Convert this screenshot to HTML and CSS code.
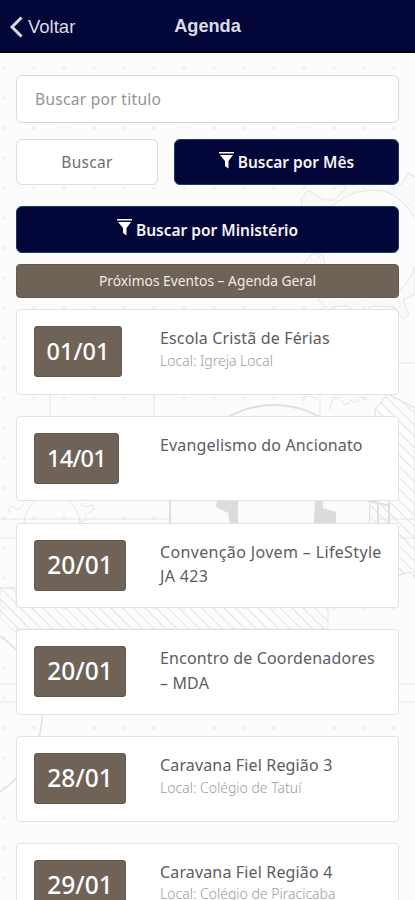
FILE: index.html
```html
<!DOCTYPE html>
<html lang="pt-BR">
<head>
    <meta charset="UTF-8">
    <meta name="viewport" content="width=device-width, initial-scale=1.0">
    <title>Agenda</title>
    <link rel="stylesheet" href="styles.css">
</head>
<body>
    <svg class="backdrop" width="415" height="900" viewBox="0 0 415 900" aria-hidden="true">
        <defs>
            <pattern id="grid" x="-11" y="53" width="30" height="30" patternUnits="userSpaceOnUse">
                <path d="M15 13v4M13 15h4" stroke="#ececee" fill="none"/>
            </pattern>
            <pattern id="hatch" width="8" height="8" patternUnits="userSpaceOnUse" patternTransform="rotate(-45)">
                <path d="M0 0v8" stroke="#e2e2e3" stroke-width="2"/>
            </pattern>
            <pattern id="fineHatch" width="3" height="3" patternUnits="userSpaceOnUse" patternTransform="rotate(-30)">
                <path d="M0 0v3" stroke="#ebebeb" stroke-width="1"/>
            </pattern>
        </defs>
        <rect y="53" width="415" height="847" fill="url(#grid)"/>
        <!-- top gear -->
        <g fill="url(#fineHatch)" stroke="#e4e4e4">
            <path d="M301 199l7-9 16 10 9 0 12-10v-8h52l3 4 8-13 9 5v44q-12-24-33-31-29-5-52 15l-30 2z"/>
            <path d="M303 264l9-10 7-1v4l3-3 3 8-2 4z"/>
            <path d="M415 266q-5 15-17 26v5h-82l9 10-8 3 6 4 11-8h14l6 7h8l10-7 22 1 9 12 6-4-6-15 12-6z"/>
        </g>
        <!-- middle parts -->
        <g fill="none" stroke="#e6e6e8">
            <path d="M50 394v22M154 394v22M320 394v22M399 363h16M0 519h415M0 538h415M0 684h415M0 702h415M0 588h16"/>
            <path d="M303 402q-2-7 7-6l8 4M330 410q0-10 6-12 6 0 7 6 5 2 8-4 4 6 10-3l8 3"/>
            <circle cx="52" cy="524" r="28"/>
            <path d="M8 514l2-8 9 4 6-8M80 503l4 4 9-2 1 4-9 7 2 4-8 2"/>
        </g>
        <circle cx="274" cy="499" r="94" fill="none" stroke="#dfdfe1" stroke-width="2"/>
        <rect x="172" y="501" width="207" height="22" fill="#fbfbfc"/>
        <path d="M170 500v23M378 502v21M389 502v21M366 500l24 6" fill="none" stroke="#dfdfe1" stroke-width="2"/>
        <path d="M217 500h21v23h-8l-2-10-12-6zM315 500h8v8l13 4v11h-22z" fill="#dcdcdf"/>
        <path d="M375 409l13-15 27 14v170l-4-6-12 3-30-50z" fill="url(#hatch)" stroke="#dcdcdd"/>
        <path d="M0 588h16v19h312v22H16v4L0 617z" fill="url(#hatch)" stroke="#e6e6e6"/>
        <circle cx="-51" cy="714" r="93" fill="none" stroke="#dfdfe1" stroke-width="1.500"/>
    </svg>

    <header class="topbar">
        <a class="back" href="#">
            <svg width="13" height="22" viewBox="0 0 13 22"><path d="M11.500 1.500L2 11l9.500 9.500" fill="none" stroke="#dcdce2" stroke-width="3"/></svg>
            Voltar
        </a>
        <h1>Agenda</h1>
    </header>

    <main class="container">
        <input type="text" class="search" placeholder="Buscar por titulo">
        <div class="actions">
            <button class="btn btn-light">Buscar</button>
            <button class="btn btn-dark">
                <svg class="filter" width="15" height="17" viewBox="0 0 15 17"><path d="M0 0h15v1.500H0zM1 3h13L9.500 9v7.500L6 14V9z" fill="#fff"/></svg>
                Buscar por Mês
            </button>
        </div>
        <button class="btn btn-dark btn-full">
            <svg class="filter" width="15" height="17" viewBox="0 0 15 17"><path d="M0 0h15v1.500H0zM1 3h13L9.500 9v7.500L6 14V9z" fill="#fff"/></svg>
            Buscar por Ministério
        </button>
        <div class="banner">Próximos Eventos – Agenda Geral</div>

        <div class="events">
            <div class="card">
                <div class="date-col"><span class="date">01/01</span></div>
                <div class="info">
                    <h2>Escola Cristã de Férias</h2>
                    <p>Local: Igreja Local</p>
                </div>
            </div>
            <div class="card">
                <div class="date-col"><span class="date narrow">14/01</span></div>
                <div class="info">
                    <h2>Evangelismo do Ancionato</h2>
                </div>
            </div>
            <div class="card">
                <div class="date-col"><span class="date wide">20/01</span></div>
                <div class="info">
                    <h2 class="long">Convenção Jovem – LifeStyle JA 423</h2>
                </div>
            </div>
            <div class="card">
                <div class="date-col"><span class="date wide">20/01</span></div>
                <div class="info">
                    <h2>Encontro de Coordenadores –&nbsp;MDA</h2>
                </div>
            </div>
            <div class="card">
                <div class="date-col"><span class="date wide">28/01</span></div>
                <div class="info">
                    <h2>Caravana Fiel Região 3</h2>
                    <p>Local: Colégio de Tatuí</p>
                </div>
            </div>
            <div class="card">
                <div class="date-col"><span class="date wide">29/01</span></div>
                <div class="info">
                    <h2>Caravana Fiel Região 4</h2>
                    <p>Local: Colégio de Piracicaba</p>
                </div>
            </div>
        </div>
    </main>
</body>
</html>
```
FILE: styles.css
```css
* {
    box-sizing: border-box;
}
body {
    margin: 0;
    height: 900px;
    overflow: hidden;
    position: relative;
    background-color: #fcfcfc;
    font-family: "Noto Sans", sans-serif;
    color: #5c5c5f;
}
.backdrop {
    position: absolute;
    top: 0;
    left: 0;
    z-index: -1;
}
.topbar {
    display: grid;
    grid-template-columns: 1fr auto 1fr;
    align-items: center;
    height: 53px;
    padding: 0 10px;
    background-color: #020638;
    border-bottom: 2px solid #000;
    font-family: "Liberation Sans", Arial, sans-serif;
    color: #dcdce2;
}
.back {
    display: flex;
    align-items: center;
    gap: 5px;
    padding-top: 2px;
    font-size: 18.5px;
    color: inherit;
    text-decoration: none;
}
.topbar h1 {
    margin: 0;
    font-size: 18.2px;
    line-height: 22px;
}
.container {
    padding: 22px 16px 0;
}
.search {
    display: block;
    width: 100%;
    height: 48px;
    padding: 0 18px;
    border: 1px solid #d9d9d9;
    border-radius: 6px;
    background-color: #fff;
    font-family: inherit;
    font-size: 15.5px;
    letter-spacing: 0.3px;
}
.search::placeholder {
    color: #939393;
}
.actions {
    display: grid;
    grid-template-columns: 142px 1fr;
    gap: 16px;
    margin: 16px 0 21px;
}
.btn {
    display: flex;
    align-items: center;
    justify-content: center;
    gap: 4px;
    height: 46px;
    padding: 0;
    border: 1px solid #ddd;
    border-radius: 6px;
    font-family: inherit;
    font-size: 15.5px;
}
.btn-light {
    background-color: #fff;
    color: #6d6d70;
    letter-spacing: 0.3px;
}
.btn-dark {
    background-color: #020638;
    border-color: #173c62;
    color: #f5f5f7;
    font-weight: 600;
}
.btn-full {
    width: 100%;
    height: 47px;
}
.filter {
    margin-top: -4px;
}
.banner {
    height: 34px;
    margin: 11px 0;
    border: 1px solid #64594f;
    border-radius: 4px;
    background-color: #6f6358;
    color: #eeebe8;
    font-size: 13.8px;
    line-height: 31px;
    text-align: center;
}
.events {
    display: grid;
    gap: 21.3px;
}
.card {
    display: grid;
    grid-template-columns: 126px 1fr;
    height: 85.5px;
    padding: 16px 14px 0 17px;
    border: 1px solid #e2e2e2;
    border-radius: 4px;
    background-color: #fff;
}
.date {
    display: block;
    width: 88px;
    height: 51px;
    border-radius: 4px;
    background-color: #6f6358;
    box-shadow: inset 0 0 0 1px #64594f;
    color: #fff;
    font-size: 23.5px;
    font-weight: 500;
    line-height: 50px;
    text-align: center;
}
.date.narrow {
    width: 85px;
    letter-spacing: -0.8px;
}
.date.wide {
    width: 92px;
    font-size: 24.5px;
}
.info h2 {
    margin: 0;
    font-size: 16px;
    font-weight: 400;
    line-height: 24.5px;
    letter-spacing: 0.15px;
}
.info h2.long {
    letter-spacing: 0.35px;
}
.info p {
    margin: 0;
    color: #9c9c9e;
    font-size: 14px;
    font-weight: 300;
    line-height: 20px;
}
```
